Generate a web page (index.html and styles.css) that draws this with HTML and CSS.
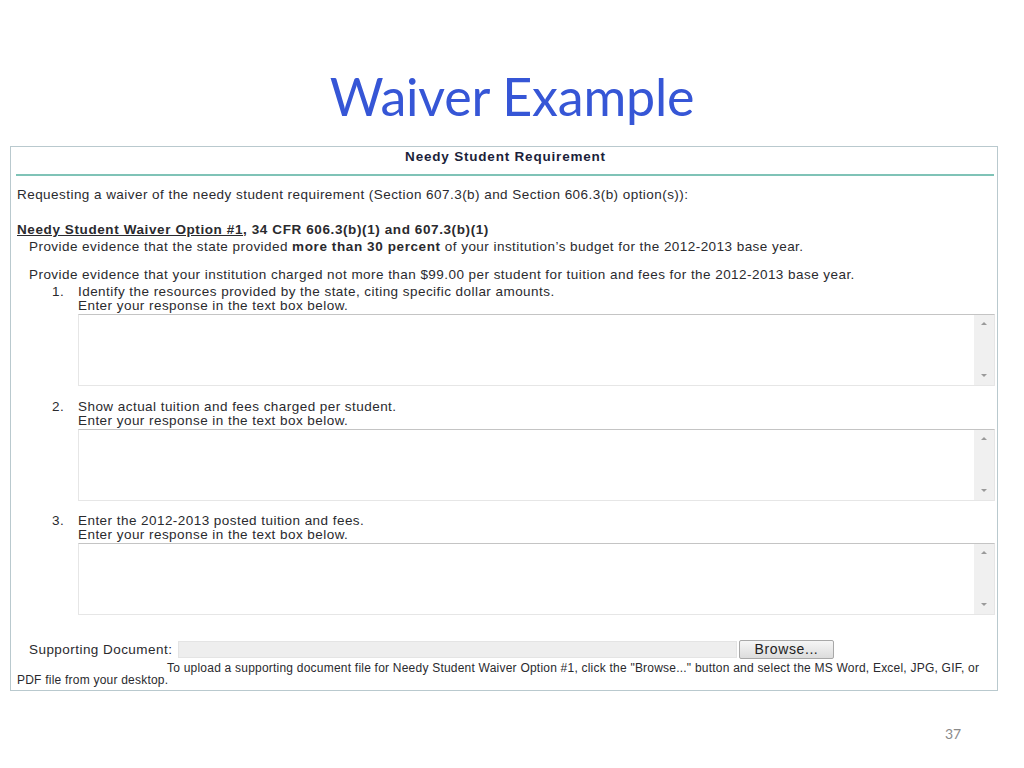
FILE: index.html
```html
<!DOCTYPE html>
<html>
<head>
<meta charset="utf-8">
<link rel="stylesheet" href="styles.css">
</head>
<body>
<div class="slide">
  <h1 class="title">Waiver Example</h1>
  <div class="panel">
    <div class="panel-title">Needy Student Requirement</div>
    <div class="rule"></div>
    <p class="intro">Requesting a waiver of the needy student requirement (Section 607.3(b) and Section 606.3(b) option(s)):</p>
    <p class="option"><span class="u">Needy Student Waiver Option #1</span>, 34 CFR 606.3(b)(1) and 607.3(b)(1)</p>
    <p class="ev ev1">Provide evidence that the state provided <b>more than 30 percent</b> of your institution’s budget for the 2012-2013 base year.</p>
    <p class="ev ev2">Provide evidence that your institution charged not more than $99.00 per student for tuition and fees for the 2012-2013 base year.</p>

    <div class="item item1">
      <div class="line"><span class="num">1.</span><span>Identify the resources provided by the state, citing specific dollar amounts.</span></div>
      <div class="line"><span class="num"></span><span>Enter your response in the text box below.</span></div>
      <div class="tbox"><div class="sb"><span class="up"></span><span class="dn"></span></div></div>
    </div>
    <div class="item item2">
      <div class="line"><span class="num">2.</span><span>Show actual tuition and fees charged per student.</span></div>
      <div class="line"><span class="num"></span><span>Enter your response in the text box below.</span></div>
      <div class="tbox"><div class="sb"><span class="up"></span><span class="dn"></span></div></div>
    </div>
    <div class="item item3">
      <div class="line"><span class="num">3.</span><span>Enter the 2012-2013 posted tuition and fees.</span></div>
      <div class="line"><span class="num"></span><span>Enter your response in the text box below.</span></div>
      <div class="tbox"><div class="sb"><span class="up"></span><span class="dn"></span></div></div>
    </div>

    <div class="upload">
      <span class="label">Supporting Document:</span>
      <span class="field"></span>
      <span class="btn">Browse...</span>
    </div>
    <p class="note">To upload a supporting document file for Needy Student Waiver Option #1, click the "Browse..." button and select the MS Word, Excel, JPG, GIF, or PDF file from your desktop.</p>
  </div>
  <div class="pagenum">37</div>
</div>
</body>
</html>
```

FILE: styles.css
```css
html, body {
  margin: 0;
  padding: 0;
  background: #ffffff;
}
.slide {
  width: 1024px;
  height: 768px;
  position: relative;
  overflow: hidden;
}
.title {
  margin: 0;
  padding-top: 68px;
  height: 146px;
  box-sizing: border-box;
  text-align: center;
  font-family: Lato, "Open Sans", sans-serif;
  font-weight: normal;
  font-size: 52px;
  line-height: 56px;
  color: #3656d6;
  letter-spacing: -0.2px;
}
.panel {
  margin-left: 10px;
  width: 988px;
  height: 545px;
  box-sizing: border-box;
  border: 1px solid #b9c9ce;
  font-family: "Liberation Sans", Arial, sans-serif;
  font-size: 13.5px;
  letter-spacing: 0.45px;
  line-height: 14px;
  color: #2a2a2e;
  padding: 0 2px 0 5px;
}
.panel p { margin: 0; }
.panel b { letter-spacing: 0.6px; }
.panel-title {
  text-align: center;
  font-weight: bold;
  color: #1c1f3a;
  padding-top: 3px;
  height: 27px;
  box-sizing: border-box;
  letter-spacing: 0.8px;
}
.rule {
  height: 2px;
  background: #7fc3b7;
  margin-right: 1px;
}
.intro {
  margin-top: 12px !important;
  padding-left: 1px;
}
.option {
  margin-top: 21px !important;
  font-weight: bold;
  padding-left: 1px;
  letter-spacing: 0.6px;
}
.option .u { text-decoration: underline; }
.ev {
  padding-left: 13px;
}
.ev1 { margin-top: 3px !important; }
.ev2 { margin-top: 14px !important; }
.item {
  margin-top: 14px;
  padding-left: 36px;
}
.item1 { margin-top: 3px; }
.item3 { margin-top: 13px; }
.line {
  display: flex;
}
.num {
  width: 26px;
  flex: none;
}
.tbox {
  margin-left: 26px;
  margin-top: 1px;
  height: 72px;
  width: 917px;
  box-sizing: border-box;
  border: 1px solid #e6e6e6;
  border-top: 1px solid #c4c4c4;
  background: #ffffff;
  display: flex;
  justify-content: flex-end;
}
.sb {
  width: 20px;
  background: #f0f0f0;
  position: relative;
}
.sb .up, .sb .dn {
  position: absolute;
  left: 7px;
  width: 0;
  height: 0;
  border-left: 3px solid transparent;
  border-right: 3px solid transparent;
}
.sb .up {
  top: 7px;
  border-bottom: 3px solid #9a9a9a;
}
.sb .dn {
  bottom: 8px;
  border-top: 3px solid #9a9a9a;
}
.upload {
  margin-top: 25px;
  display: flex;
  align-items: center;
  height: 19px;
  padding-left: 13px;
}
.label {
  width: 149px;
  flex: none;
  white-space: nowrap;
}
.field {
  width: 559px;
  height: 17px;
  background: #eeeeee;
  border: 1px solid #e4e4e4;
  box-sizing: border-box;
}
.btn {
  margin-left: 2px;
  width: 95px;
  height: 19px;
  box-sizing: border-box;
  border: 1px solid #a8a8a8;
  border-radius: 2px;
  background: linear-gradient(#f6f6f6, #dcdcdc);
  text-align: center;
  font-size: 14px;
  letter-spacing: 0.6px;
  line-height: 17px;
  color: #222;
}
.note {
  margin-top: 3px !important;
  font-size: 12px;
  letter-spacing: 0.22px;
  line-height: 12px;
  text-indent: 150px;
  padding-left: 1px;
  padding-right: 6px;
}
.pagenum {
  position: absolute;
  left: 945px;
  top: 725px;
  font-family: Lato, "Open Sans", sans-serif;
  font-size: 14px;
  color: #8a8a8a;
}
```
